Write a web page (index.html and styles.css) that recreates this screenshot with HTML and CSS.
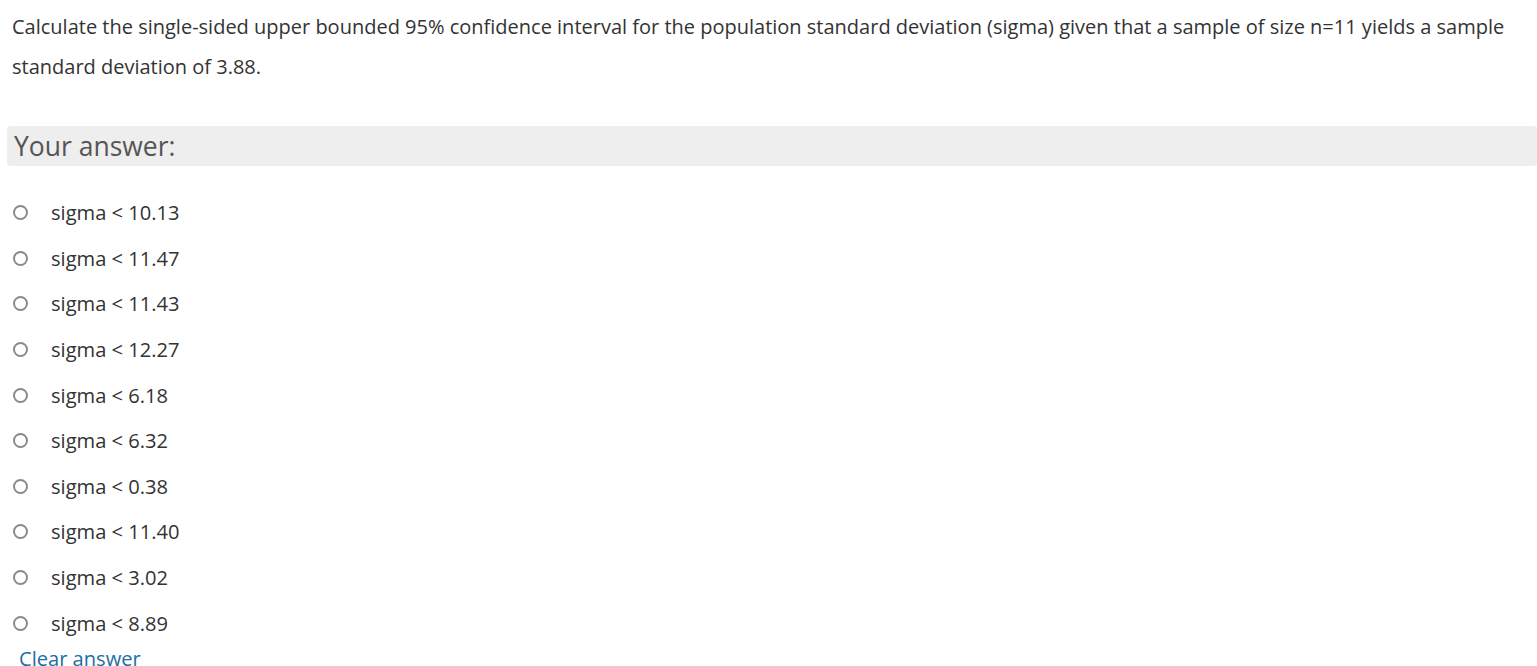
FILE: index.html
```html
<!DOCTYPE html>
<html>
<head>
<meta charset="utf-8">
<link rel="stylesheet" href="styles.css">
</head>
<body>
<div class="question">Calculate the single-sided upper bounded 95% confidence interval for the population standard deviation (sigma) given that a sample of size n=11 yields a sample standard deviation of 3.88.</div>
<div class="answer-head">Your answer:</div>
<ul class="options">
  <li><span class="radio"></span><span class="label">sigma &lt; 10.13</span></li>
  <li><span class="radio"></span><span class="label">sigma &lt; 11.47</span></li>
  <li><span class="radio"></span><span class="label">sigma &lt; 11.43</span></li>
  <li><span class="radio"></span><span class="label">sigma &lt; 12.27</span></li>
  <li><span class="radio"></span><span class="label">sigma &lt; 6.18</span></li>
  <li><span class="radio"></span><span class="label">sigma &lt; 6.32</span></li>
  <li><span class="radio"></span><span class="label">sigma &lt; 0.38</span></li>
  <li><span class="radio"></span><span class="label">sigma &lt; 11.40</span></li>
  <li><span class="radio"></span><span class="label">sigma &lt; 3.02</span></li>
  <li><span class="radio"></span><span class="label">sigma &lt; 8.89</span></li>
</ul>
<a class="clear">Clear answer</a>
</body>
</html>
```
FILE: styles.css
```css
html, body { margin: 0; padding: 0; background: #fff; }
body {
  font-family: "Open Sans", "Liberation Sans", sans-serif;
  color: #333;
  overflow: hidden;
  height: 666px;
}
.question {
  font-size: 20px;
  line-height: 40px;
  padding: 7px 12px 0 12px;
  color: #333;
}
.answer-head {
  margin: 39px 0 0 7px;
  height: 40px;
  line-height: 40px;
  background: #eeeeee;
  border-radius: 4px;
  font-size: 26.5px;
  color: #555;
  padding-left: 7px;
}
.options {
  list-style: none;
  margin: 24px 0 0 0;
  padding: 0;
}
.options li {
  display: flex;
  align-items: center;
  height: 45.6px;
  font-size: 20.1px;
  color: #333;
}
.radio {
  flex: none;
  width: 11px;
  height: 11px;
  border: 2px solid #8a8a8a;
  border-radius: 50%;
  margin-left: 13px;
  margin-right: 23px;
  box-sizing: content-box;
}
.clear {
  display: block;
  font-size: 20.1px;
  color: #1c6ea4;
  margin: 0 0 0 19px;
  line-height: 26px;
}
```
